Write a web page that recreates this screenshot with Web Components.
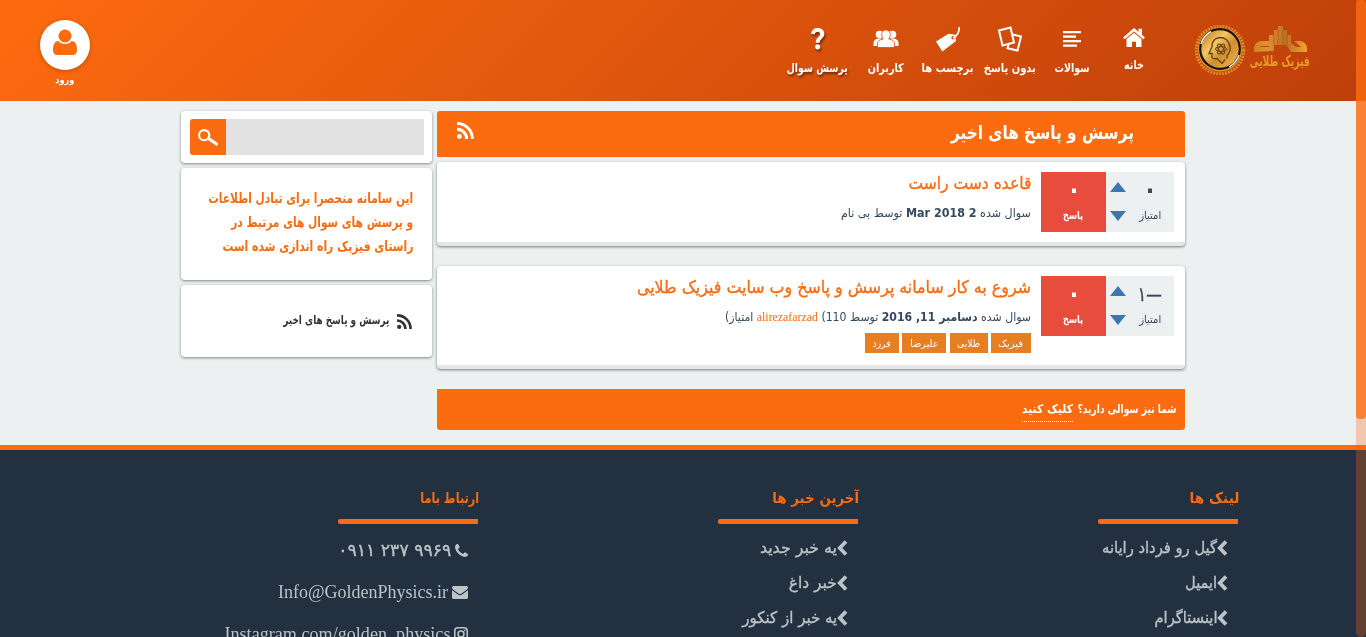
<!DOCTYPE html>
<html lang="fa" dir="rtl">
<head>
<meta charset="utf-8">
<title>پرسش و پاسخ های اخیر</title>
<style>
html,body{margin:0;height:637px;overflow:hidden}
body{background:#ecf0f1;font-family:"DejaVu Sans",sans-serif;color:#34495e}
</style>
</head>
<body>
<qa-app></qa-app>
<script>
const define = (name, html, setup) => customElements.define(name, class extends HTMLElement {
  constructor() {
    super();
    const t = document.createElement('template');
    t.innerHTML = html;
    this.attachShadow({mode: 'open'}).append(t.content.cloneNode(true));
  }
  connectedCallback() { if (setup) setup(this, this.shadowRoot); }
});

const ICONS = {
  home: ['0 0 22 20', '<path d="M11 0 22 10l-1.700 1.800L11 3.600 1.700 11.800 0 10 11 0zM15.500 .8H19v7L15.500 4.500zM3.500 11.700 11 5l7.500 6.700V20H13v-5.500H9V20H3.500z"/>'],
  list: ['0 0 18 16', '<path d="M0 0h18v2.200H0zM0 4.500h13v2.200H0zM0 9h18v2.200H0zM0 13.500h14v2.200H0z"/>'],
  cards: ['0 0 26 26', '<g fill="none" stroke="#fff" stroke-width="2"><path d="M2 4.500 13.500 1.500 17 16.500 5.500 19.500z"/><path d="M16 8.500 24 10.500 20.500 24.500 10.500 22.200 11.500 18.500"/></g>'],
  tag: ['0 0 26 26', '<path fill-rule="evenodd" d="M1 15.500 13.500 7.800 20.500 8.800 21 15 7.300 25.500zM18 10a1.700 1.700 0 1 0 .1 3.400 1.700 1.700 0 0 0 0-3.400z"/><path d="M18 12C22 10.500 25 5 24 1" fill="none" stroke="#fff" stroke-width="1.800"/>'],
  users: ['0 0 26 18', '<circle cx="6.500" cy="4.500" r="3.800"/><circle cx="19.500" cy="4.500" r="3.800"/><path d="M.5 16v-3q0-4 5-4.500h5V16zM25.500 16v-3q0-4-5-4.500h-5V16z"/><path d="M13 0c3 0 4.300 2 4.300 4.700 0 2-.8 3.300-1.600 4.300 3.500.8 5.800 1.500 5.800 5V17.500h-17V14c0-3.500 2.300-4.200 5.800-5-.8-1-1.600-2.300-1.600-4.300C8.700 2 10 0 13 0z" stroke="#d2500c" stroke-width=".8"/>'],
  help: ['0 0 16 23', '<path d="M1 5.800C2 2 4.500 0 8.300 0c4 0 7 2.400 7 6 0 4.800-5 5.500-5 9.300H6.100c0-5.300 4.700-5.800 4.700-9 0-1.500-1-2.500-2.600-2.500-1.700 0-2.800 1-3.300 3z"/><circle cx="8.200" cy="19.700" r="2.700"/>'],
  user: ['0 0 24 27', '<circle cx="12" cy="7" r="6.500"/><path d="M5.300 12C7 14 9 15 12 15s5-1 6.700-3C22 12 24 15 24 21c0 3-1.500 5-4.500 5h-15C1.500 26 0 24 0 21c0-6 2-9 5.300-9z"/>'],
  search: ['0 0 20 17', '<circle cx="6.200" cy="6.200" r="5.100" fill="none" stroke="#fff" stroke-width="2.100"/><path d="m10.500 9.500 8 5.500" stroke="#fff" stroke-width="3.200" stroke-linecap="round"/>'],
  rss: ['0 0 18 18', '<circle cx="2.600" cy="15.400" r="2.600"/><path d="M0 7.800a10 10 0 0 1 10.200 10.200M0 1.700a16 16 0 0 1 16.300 16.300" fill="none" stroke="currentColor" stroke-width="3.200"/>'],
  chevron: ['0 0 11 16', '<path d="M9 1.500 2.800 8 9 14.500" fill="none" stroke="currentColor" stroke-width="3.800"/>'],
  phone: ['0 128 1408 1408', '<path d="M1408 1240q0 27-10 70.500t-21 68.500q-21 50-122 106-94 51-186 51-27 0-53-3.500t-57.500-12.500-47-14.500-55.500-20.500-49-18q-98-35-175-83-127-79-264-216t-216-264q-48-77-83-175-3-9-18-49t-20.500-55.500-14.500-47-12.500-57.500-3.500-53q0-92 51-186 56-101 106-122 25-11 68.500-21t70.500-10q14 0 21 3 18 6 53 76 11 19 30 54t35 63.500 31 53.500q3 4 17.500 25t21.500 35.500 7 28.500q0 20-28.500 50t-62 55-62 53-28.500 46q0 9 5 22.500t8.500 20.500 14 24 11.500 19q76 137 174 235t235 174q2 1 19 11.500t24 14 20.500 8.500 22.500 5q18 0 46-28.500t53-62 55-62 50-28.500q14 0 28.500 7t35.500 21.500 25 17.500q25 15 53.500 31t63.500 35 54 30q70 35 76 53 3 7 3 21z"/>'],
  mail: ['0 0 16 13', '<path d="M0 1.500Q0 0 1.500 0h13Q16 0 16 1.500q0 1.300-1.200 2.300L9.500 7.600Q8 8.600 6.500 7.600L1.200 3.800Q0 2.900 0 1.500zM0 4.200l6 4.300q2 1.300 4 0l6-4.300v7.300q0 1.500-1.500 1.500h-13Q0 13 0 11.500z"/>'],
  insta: ['0 0 14 14', '<g fill="none" stroke="currentColor" stroke-width="1.600"><rect x=".8" y=".8" width="12.400" height="12.400" rx="3"/><circle cx="7" cy="7" r="3"/></g><circle cx="10.700" cy="3.300" r=".9"/>'],
  up: ['0 0 16 10', '<path d="M8 0l8 10H0z"/>'],
  down: ['0 0 16 10', '<path d="M8 10l8-10H0z"/>']
};
define('qa-icon', `<style>:host{display:block;flex:none}svg{display:block;width:100%;height:100%;fill:currentColor}</style>`, (el, root) => {
  const [box, body] = ICONS[el.getAttribute('name')];
  el.style.width = el.getAttribute('w') + 'px';
  el.style.height = el.getAttribute('h') + 'px';
  root.innerHTML += `<svg viewBox="${box}" preserveAspectRatio="none">${body}</svg>`;
});

define('golden-logo', `<style>:host{display:flex;direction:ltr;gap:4px;width:116px}
.badge{width:52px;height:50px;flex:none}.word{display:flex;flex-direction:column;width:60px;color:#e59a2a}.sky{width:53px;height:27px;margin:1px 0 0 4px;flex:none}fit-text{margin-top:-1px;direction:rtl}</style>
<svg class="badge" viewBox="0 0 52 50"><defs><linearGradient id="g" x1="0" y1="0" x2="1" y2="1"><stop offset="0" stop-color="#b87517"/><stop offset=".35" stop-color="#f3c765"/><stop offset=".6" stop-color="#d08d30"/><stop offset="1" stop-color="#f5b850"/></linearGradient></defs>
<circle cx="26" cy="25" r="23.800" fill="none" stroke="#e08a26" stroke-width="3" stroke-dasharray="1.900 1.100"/>
<circle cx="26" cy="24.500" r="22" fill="#d9973a"/><circle cx="26" cy="24" r="19.800" fill="none" stroke="#15110c" stroke-width="2.200"/><path d="M7 19A20 20 0 0 1 17 6.500M45 30A20 20 0 0 1 35 41.800" stroke="#f3ead6" stroke-width="1.500" fill="none"/>
<circle cx="26" cy="24" r="18.300" fill="url(#g)"/><path d="M33 33.500v-3q4-4 3-9-2-9-10-9-8 1-8 9l-3 7h3v4q1 2 5 1l5 5 3-4" fill="none" stroke="#684313" stroke-width="1.300"/><g fill="none" stroke="#684313" stroke-width="1"><ellipse cx="27" cy="24" rx="5.500" ry="2.400"/><ellipse cx="27" cy="24" rx="5.500" ry="2.400" transform="rotate(60 27 24)"/><ellipse cx="27" cy="24" rx="5.500" ry="2.400" transform="rotate(120 27 24)"/></g></svg>
<div class="word"><svg class="sky" viewBox="0 0 53 27"><defs><linearGradient id="h"><stop offset="0" stop-color="#d08524"/><stop offset=".25" stop-color="#dc9230"/><stop offset=".6" stop-color="#b87326"/><stop offset="1" stop-color="#f0a42d"/></linearGradient></defs><path fill="url(#h)" d="M0 26V21Q2 15 8 15h7v5H8q-2 0-2 1h9V9h5V4h4V0h5v4h4v5h4v8l5 4h5l-7-6h7q6 2 6 7v4H37l-4-6v-1H20v6z"/><path d="M20 9v10M24 4v15M29 4v15M33 9v10" stroke="#c4480c" stroke-width=".7"/></svg>
<fit-text w="60" size="15" lh="20" bold>فیزیک طلایی</fit-text></div>`);

define('nav-item', `<style>:host{display:flex;flex-direction:column;align-items:center;width:62px;flex:none;color:#fff}.i{height:40px;display:flex;align-items:center}:host([shadowed]){filter:drop-shadow(1px 2px 1px rgba(0,0,0,.5))}</style><div class="i"><slot name="icon"></slot></div><slot></slot>`);

define('site-header', `<style>:host{display:flex;height:101px;box-sizing:border-box;padding:0 56px 0 40px;background:linear-gradient(135deg,#fd6b0f,#be3f0a)}
golden-logo{margin:25px 0 0 29px}nav{display:flex;padding-top:18px}nav qa-icon{margin-top:1px}.wide{width:75px}.home{margin-top:-3px}nav .home qa-icon{margin-top:4px}
.login{margin:20px auto 0 0;width:50px;display:flex;flex-direction:column;align-items:center;color:#fff}
.circle{width:50px;height:50px;border-radius:50%;background:#fff;color:#fb6b10;display:flex;align-items:center;justify-content:center;box-shadow:0 1px 4px rgba(0,0,0,.25)}qa-icon.u{margin-bottom:5px}</style>
<golden-logo></golden-logo><nav>
<nav-item class="home"><qa-icon slot="icon" name="home" w="22" h="19"></qa-icon><fit-text w="20" size="12" lh="20" bold>خانه</fit-text></nav-item>
<nav-item><qa-icon slot="icon" name="list" w="18" h="16"></qa-icon><fit-text w="35" size="12" lh="20" bold>سوالات</fit-text></nav-item>
<nav-item><qa-icon slot="icon" name="cards" w="26" h="26"></qa-icon><fit-text w="52" size="12" lh="20" bold>بدون پاسخ</fit-text></nav-item>
<nav-item><qa-icon slot="icon" name="tag" w="26" h="26"></qa-icon><fit-text w="52" size="12" lh="20" bold>برچسب ها</fit-text></nav-item>
<nav-item><qa-icon slot="icon" name="users" w="26" h="18"></qa-icon><fit-text w="36" size="12" lh="20" bold>کاربران</fit-text></nav-item>
<nav-item class="wide" shadowed><qa-icon slot="icon" name="help" w="15" h="22"></qa-icon><fit-text w="61" size="12" lh="20" bold>پرسش سوال</fit-text></nav-item></nav>
<div class="login"><div class="circle"><qa-icon class="u" name="user" w="24" h="27"></qa-icon></div><fit-text w="19" size="10" lh="18" bold>ورود</fit-text></div>`);

define('side-card', `<style>:host{display:block;box-sizing:border-box;width:251px;background:#fff;border-radius:4px;box-shadow:0 1px 3px rgba(0,0,0,.45)}</style><slot></slot>`);

define('search-box', `<style>:host{display:flex;padding:8px 8px 8px 9px;height:36px}.f{flex:1;background:#e2e2e2}.b{width:36px;background:#fb6b10;border-radius:3px 0 0 3px;display:flex;align-items:center;justify-content:center}</style><div class="f"></div><div class="b"><qa-icon name="search" w="20" h="17"></qa-icon></div>`);

define('side-bar', `<style>:host{display:flex;flex-direction:column;gap:5px}.s{height:52px}.a{height:112px;padding:19px 19px 0 0;color:#fb6b10}.r{height:72px;padding:25px 20px 0 0;color:#333}.row{display:flex;gap:8px;align-items:center}.row qa-icon{margin-top:2px}</style>
<side-card class="s"><search-box></search-box></side-card>
<side-card class="a"><fit-text w="205" size="14" lh="24" bold>این سامانه منحصرا برای تبادل اطلاعات</fit-text><fit-text w="182" size="14" lh="24" bold>و پرسش های سوال های مرتبط در</fit-text><fit-text w="191" size="14" lh="24" bold>راستای فیزیک راه اندازی شده است</fit-text></side-card>
<side-card class="r"><div class="row"><qa-icon name="rss" w="15" h="15"></qa-icon><fit-text w="106" size="12" lh="20" bold>پرسش و پاسخ های اخیر</fit-text></div></side-card>`);

define('vote-box', `<style>:host{display:flex;width:133px;height:60px;flex:none;background:#ecf0f1;color:#34495e}.c{display:flex;flex-direction:column;align-items:center}.p{width:48px;padding-top:6px;box-sizing:border-box;height:60px}.v{width:16px;margin-left:4px;color:#3b78b0;gap:19px;padding-top:10px;box-sizing:border-box;height:60px}.n{width:65px;background:#e74c3c;color:#fff;padding-top:6px;box-sizing:border-box}.num{height:26px}</style>
<div class="c p"><div class="num"><slot></slot></div><fit-text w="22" size="10.500" lh="22">امتیاز</fit-text></div>
<div class="c v"><qa-icon name="up" w="16" h="10"></qa-icon><qa-icon name="down" w="16" h="10"></qa-icon></div>
<div class="c n"><div class="num"><fit-text w="14" size="26" lh="25" bold>۰</fit-text></div><fit-text w="20" size="11" lh="22" bold>پاسخ</fit-text></div>`);

define('tag-chip', `<style>:host{display:flex;align-items:center;justify-content:center;height:20px;background:#e67e22;color:#fff}</style><slot></slot>`);

define('question-card', `<style>:host{display:flex;gap:10px;box-sizing:border-box;background:#fff;border-radius:4px;border-bottom:4px solid #e6e6e6;padding:10px 11px 0;box-shadow:0 1px 3px rgba(0,0,0,.5)}.m{display:flex;flex-direction:column}</style><slot name="vote"></slot><div class="m"><slot></slot></div>`);

define('question-list', `<style>:host{display:block;width:748px}
.head{height:46px;box-sizing:border-box;background:#fb6b10;border-radius:3px 3px 0 0;color:#fff;display:flex;justify-content:space-between;padding:10px 51px 0 20px}.head qa-icon{margin-top:1px}
.q1{height:84px;margin-top:5px}.q2{height:103px;margin-top:20px}.t{color:#fb6b10}.meta{margin-top:4px}.u{font-family:"Liberation Serif",serif;color:#fb6b10;font-size:13px}.tags{display:flex;margin-top:4px}
.cta{height:41px;box-sizing:border-box;margin-top:20px;background:#fb6b10;border-radius:0 0 3px 3px;color:#fff;display:flex;gap:4px;padding:8px 9px 0}.l{border-bottom:1px dotted #fff}</style>
<div class="head"><fit-text w="183" size="19" lh="24" bold>پرسش و پاسخ های اخیر</fit-text><qa-icon name="rss" w="17" h="17"></qa-icon></div>
<question-card class="q1"><vote-box slot="vote"><fit-text w="14" size="26" lh="25" bold>۰</fit-text></vote-box>
<fit-text class="t" w="123" size="17.500" lh="25" semi>قاعده دست راست</fit-text>
<fit-text class="meta" w="190" size="12" lh="24">سوال شده <b>2 Mar 2018</b> توسط بی نام</fit-text></question-card>
<question-card class="q2"><vote-box slot="vote"><fit-text w="24" size="20" lh="26" semi>—۱</fit-text></vote-box>
<fit-text class="t" w="394" size="17.500" lh="25" semi>شروع به کار سامانه پرسش و پاسخ وب سایت فیزیک طلایی</fit-text>
<fit-text class="meta" w="306" size="12" lh="24">سوال شده <b>دسامبر 11, 2016</b> توسط 110) <span class="u">alirezafarzad</span> امتیاز)</fit-text>
<div class="tags"><tag-chip style="width:40px"><fit-text w="25" size="10" lh="20">فیزیک</fit-text></tag-chip><tag-chip style="width:38px;margin-right:3px"><fit-text w="23" size="10" lh="20">طلایی</fit-text></tag-chip><tag-chip style="width:44px;margin-right:4px"><fit-text w="28" size="10" lh="20">علیرضا</fit-text></tag-chip><tag-chip style="width:34px;margin-right:3px"><fit-text w="18" size="10" lh="20">فرزد</fit-text></tag-chip></div></question-card>
<div class="cta"><fit-text w="99" size="12" lh="24" bold>شما نیز سوالی دارید؟</fit-text><fit-text class="l" w="51" size="12" lh="24" bold>کلیک کنید</fit-text></div>`);

define('footer-column', `<style>:host{display:block;width:380px;flex:none}.h{color:#fb6b10;margin-right:-1px}.bar{width:140px;height:5px;background:#fb6b10;border-radius:2px 0 0 2px;margin-top:8px}.items{padding-right:10px;color:#bdc3c7}</style><div class="h"><slot name="title"></slot></div><div class="bar"></div><div class="items"><slot></slot></div>`);
define('footer-link', `<style>:host{display:flex;align-items:center;height:35px}::slotted(qa-icon){position:relative;top:-1px}:host([contact]){gap:4px;height:42px}</style><slot></slot>`);

define('site-footer', `<style>:host{display:flex;height:192px;box-sizing:border-box;border-top:5px solid #fb6b10;background:#22303f;padding:37px 128px 0 0;overflow:hidden}
.first{padding-top:7px}.c3{padding-top:6px}.ser{font-family:"Liberation Serif",serif}</style>
<footer-column><fit-text slot="title" w="50" size="15" lh="24" bold>لینک ها</fit-text><footer-link class="first"><qa-icon name="chevron" w="11" h="16"></qa-icon><fit-text w="115" size="16" lh="30" semi>گیل رو فرداد رایانه</fit-text></footer-link><footer-link><qa-icon name="chevron" w="11" h="16"></qa-icon><fit-text w="32" size="16" lh="30" semi>ایمیل</fit-text></footer-link><footer-link><qa-icon name="chevron" w="11" h="16"></qa-icon><fit-text w="63" size="16" lh="30" semi>اینستاگرام</fit-text></footer-link></footer-column>
<footer-column><fit-text slot="title" w="87" size="15" lh="24" bold>آخرین خبر ها</fit-text><footer-link class="first"><qa-icon name="chevron" w="11" h="16"></qa-icon><fit-text w="77" size="16" lh="30" semi>یه خبر جدید</fit-text></footer-link><footer-link><qa-icon name="chevron" w="11" h="16"></qa-icon><fit-text w="48" size="16" lh="30" semi>خبر داغ</fit-text></footer-link><footer-link><qa-icon name="chevron" w="11" h="16"></qa-icon><fit-text w="95" size="16" lh="30" semi>یه خبر از کنکور</fit-text></footer-link></footer-column>
<footer-column><fit-text slot="title" w="59" size="15" lh="24" bold>ارتباط باما</fit-text><footer-link class="c3" contact><qa-icon name="phone" w="13" h="13"></qa-icon><fit-text w="113" size="17" lh="30" ltr semi>۰۹۱۱ ۲۳۷ ۹۹۶۹</fit-text></footer-link><footer-link contact><qa-icon name="mail" w="16" h="13"></qa-icon><fit-text class="ser" w="170" size="18" lh="30" ltr>Info@GoldenPhysics.ir</fit-text></footer-link><footer-link contact><qa-icon name="insta" w="14" h="14"></qa-icon><fit-text class="ser" w="226" size="18" lh="30" ltr>Instagram.com/golden_physics</fit-text></footer-link></footer-column>`);

define('scroll-rail', `<style>:host{position:absolute;right:0;top:0;width:10px;height:637px;background:rgba(251,107,16,.3);border-radius:0 0 5px 5px}.t{height:419px;background:rgba(251,107,16,.75);border-radius:4px}</style><div class="t"></div>`);

define('qa-app', `<style>:host{display:block}main{display:flex;gap:5px;padding:10px 181px 0;height:344px;box-sizing:border-box}</style><site-header></site-header><main><question-list></question-list><side-bar></side-bar></main><site-footer></site-footer><scroll-rail></scroll-rail>`);

/* One line of text, condensed or widened to the column width given in "w". */
define('fit-text', `<style>:host{display:block;flex:none;white-space:nowrap}span{display:inline-block;transform-origin:100% 50%}:host([bold]) span{font-weight:bold}:host([semi]) span{-webkit-text-stroke:.35px currentColor}:host([ltr]) span{direction:ltr}</style><span><slot></slot></span>`, (el, root) => {
  const s = root.querySelector('span'), w = +el.getAttribute('w'), lh = +el.getAttribute('lh');
  el.style.width = w + 'px';
  el.style.height = lh + 'px';
  el.style.lineHeight = lh - 2 + 'px';
  s.style.fontSize = el.getAttribute('size') + 'px';
  s.style.transform = `scaleX(${w / s.getBoundingClientRect().width})`;
});
</script>
</body>
</html>
